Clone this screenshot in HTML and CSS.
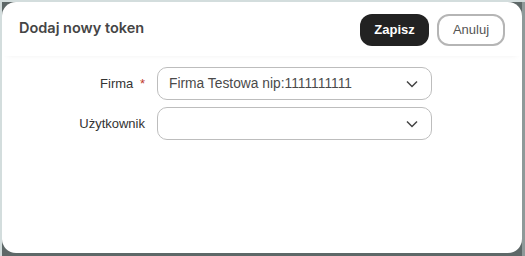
FILE: index.html
```html
<!DOCTYPE html>
<html lang="pl">
<head>
    <meta charset="UTF-8">
    <meta name="viewport" content="width=device-width, initial-scale=1.0">
    <title>Dodaj nowy token</title>
    <link rel="stylesheet" href="styles.css">
</head>
<body>
    <div class="backdrop">
        <div class="dialog">
            <!-- Header -->
            <div class="dialog-header">
                <h2>Dodaj nowy token</h2>
                <div class="actions">
                    <button class="btn btn-primary">Zapisz</button>
                    <button class="btn btn-outline">Anuluj</button>
                </div>
            </div>

            <!-- Form -->
            <form class="token-form">
                <label class="field-label">Firma <span class="required">*</span></label>
                <div class="select">
                    <span class="select-value">Firma Testowa nip:1111111111</span>
                    <svg class="chevron" width="12" height="8" viewBox="0 0 12 8"><polyline points="1,1.5 6,6.5 11,1.5" fill="none" stroke="#444" stroke-width="1.5"/></svg>
                </div>

                <label class="field-label">Użytkownik</label>
                <div class="select">
                    <span class="select-value"></span>
                    <svg class="chevron" width="12" height="8" viewBox="0 0 12 8"><polyline points="1,1.5 6,6.5 11,1.5" fill="none" stroke="#444" stroke-width="1.5"/></svg>
                </div>
            </form>
        </div>
    </div>
</body>
</html>
```

FILE: styles.css
```css
* {
    margin: 0;
    padding: 0;
    box-sizing: border-box;
    font-family: 'Liberation Sans', Arial, sans-serif;
}

body {
    width: 525px;
    height: 256px;
    overflow: hidden;
}

.backdrop {
    height: 256px;
    padding: 2px 3px 3px 2px;
    background: #5e6868;
    box-shadow: inset 2px 2px 0 #d3dddd, inset -3px 0 0 #8e9999;
}

.dialog {
    height: 100%;
    background: #fff;
    border-radius: 14px;
    overflow: hidden;
}

.dialog-header {
    height: 54px;
    display: flex;
    align-items: center;
    justify-content: space-between;
    padding: 0 17px 0 17px;
    box-shadow: 0 4px 6px -5px rgba(0, 0, 0, 0.08);
}

.dialog-header h2 {
    font-family: 'Inter', 'Roboto', sans-serif;
    font-size: 14.5px;
    font-weight: 600;
    color: #454545;
    margin-top: -4px;
}

.actions {
    display: flex;
    gap: 8px;
    margin-top: 1px;
}

.btn {
    height: 32px;
    border-radius: 12px;
    font-size: 13px;
    cursor: pointer;
}

.btn-primary {
    width: 69px;
    background: #222222;
    color: #fff;
    border: none;
    font-weight: 700;
}

.btn-outline {
    width: 68px;
    background: #fff;
    color: #555;
    border: 2px solid #b5b5b5;
    font-weight: 400;
}

.token-form {
    display: grid;
    grid-template-columns: 143px 275px;
    column-gap: 12px;
    row-gap: 7px;
    margin-top: 11px;
    align-items: center;
}

.field-label {
    text-align: right;
    font-size: 13px;
    color: #333;
}

.required {
    color: #c0392b;
    margin-left: 3px;
}

.select {
    height: 33px;
    border: 1px solid #bdbdbd;
    border-radius: 10px;
    display: flex;
    align-items: center;
    justify-content: space-between;
    padding: 0 13px 0 11px;
}

.select-value {
    font-size: 13.8px;
    color: #4a4a4a;
}
```
